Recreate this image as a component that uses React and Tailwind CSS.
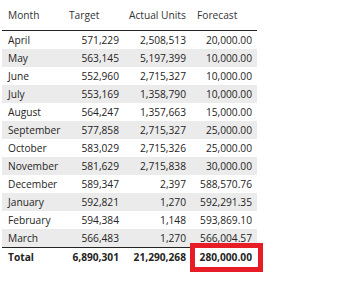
import React from 'react';

const rows = [
  ['April', '571,229', '2,508,513', '20,000.00'],
  ['May', '563,145', '5,197,399', '10,000.00'],
  ['June', '552,960', '2,715,327', '10,000.00'],
  ['July', '553,169', '1,358,790', '10,000.00'],
  ['August', '564,247', '1,357,663', '15,000.00'],
  ['September', '577,858', '2,715,327', '25,000.00'],
  ['October', '583,029', '2,715,326', '25,000.00'],
  ['November', '581,629', '2,715,838', '30,000.00'],
  ['December', '589,347', '2,397', '588,570.76'],
  ['January', '592,821', '1,270', '592,291.35'],
  ['February', '594,384', '1,148', '593,869.10'],
  ['March', '566,483', '1,270', '566,004.57'],
];

const App = () => {
  return (
    <div className="w-[345px] h-[296px] bg-white text-[#252423] text-[10.2px] leading-none" style={{ fontFamily: '"Open Sans", "Noto Sans", sans-serif' }}>
      <div className="relative ml-[2px] w-[255px]">
        {/* header */}
        <div className="flex h-[31px] items-center border-b border-[#252423] text-[#333]">
          <div className="w-[61px] pl-[6px]">Month</div>
          <div className="w-[61px] pl-[6px]">Target</div>
          <div className="w-[67px] pl-[5px]">Actual Units</div>
          <div className="w-[66px] pl-[6px]">Forecast</div>
        </div>

        {/* body rows */}
        {rows.map((r, i) => (
          <div key={r[0]} className={`flex h-[18px] items-center ${i % 2 === 1 ? 'bg-[#ebebeb]' : 'bg-white'}`}>
            <div className="w-[61px] pl-[6px]">{r[0]}</div>
            <div className="w-[61px] pr-[5px] text-right">{r[1]}</div>
            <div className="w-[67px] pr-[5px] text-right">{r[2]}</div>
            <div className="w-[66px] pr-[5px] text-right">{r[3]}</div>
          </div>
        ))}

        {/* total */}
        <div className="flex h-[19px] items-center border-t border-[#252423] font-bold">
          <div className="w-[61px] pl-[6px]">Total</div>
          <div className="w-[61px] pr-[5px] text-right">6,890,301</div>
          <div className="w-[67px] pr-[5px] text-right">21,290,268</div>
          <div className="w-[66px] pr-[5px] text-right">280,000.00</div>
        </div>

        {/* highlight box over total forecast */}
        <div className="absolute left-[188px] top-[243px] w-[73px] h-[29px] border-[5px] border-[#e81c24]" />
      </div>
    </div>
  );
};

export default App;
